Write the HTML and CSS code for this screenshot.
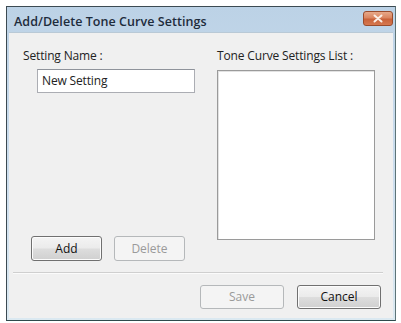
FILE: index.html
```html
<!DOCTYPE html>
<html>
<head>
<meta charset="utf-8">
<link rel="stylesheet" href="styles.css">
</head>
<body>
<div class="window">
  <div class="titlebar">
    <span class="title">Add/Delete Tone Curve Settings</span>
    <div class="close">
      <svg width="12" height="9" viewBox="0 0 12 9"><path d="M2.5 1.5 L9.5 7.5 M9.5 1.5 L2.5 7.5" stroke="#fbeee6" stroke-width="2" stroke-linecap="round"/></svg>
    </div>
  </div>
  <div class="client">
    <div class="main">
      <div class="col-left">
        <div class="label">Setting Name :</div>
        <div class="input">New Setting</div>
        <div class="btn-row">
          <div class="btn">Add</div>
          <div class="btn disabled">Delete</div>
        </div>
      </div>
      <div class="col-right">
        <div class="label">Tone Curve Settings List :</div>
        <div class="list"></div>
      </div>
    </div>
    <div class="separator"></div>
    <div class="footer">
      <div class="btn wide disabled">Save</div>
      <div class="btn wide">Cancel</div>
    </div>
  </div>
</div>
</body>
</html>
```

FILE: styles.css
```css
html, body {
  margin: 0;
  padding: 0;
  background: #ffffff;
}
body {
  font-family: "Open Sans", "Noto Sans", sans-serif;
  font-size: 12px;
  color: #1a1a1a;
}
.window {
  margin: 6px 0 0 6px;
  width: 388px;
  height: 313px;
  border: 1px solid #3c4a52;
  border-right-color: #5d7478;
  border-bottom-color: #2f4a4c;
  background: linear-gradient(180deg, #bcd2e6 0%, #cfe0ef 60%, #dbe9f1 100%);
  display: flex;
  flex-direction: column;
}
.titlebar {
  height: 25px;
  display: flex;
  align-items: flex-start;
  justify-content: space-between;
  padding-left: 7px;
}
.title {
  margin-top: 6px;
  font-size: 12.5px;
  font-weight: 600;
  color: #1e2c3c;
  letter-spacing: 0.05px;
}
.close {
  margin-top: 4px;
  margin-right: 2px;
  width: 28px;
  height: 13px;
  border: 1px solid #9a4b2c;
  border-radius: 3px;
  background: linear-gradient(180deg, #e7a98a 0%, #da8560 45%, #c9623a 55%, #d6784f 100%);
  display: flex;
  align-items: center;
  justify-content: center;
}
.client {
  flex: 1;
  margin: 0 2px 2px 2px;
  background: #f0f0f0;
  border-top: 1px solid #b9c9d6;
  display: flex;
  flex-direction: column;
  padding-top: 16px;
}
.main {
  display: grid;
  grid-template-columns: 194px 158px;
  padding-left: 14px;
  height: 212px;
}
.label {
  height: 14px;
  line-height: 14px;
  color: #222;
  letter-spacing: -0.15px;
}
.col-left {
  display: flex;
  flex-direction: column;
}
.input {
  margin-top: 6px;
  margin-left: 14px;
  width: 152px;
  height: 22px;
  line-height: 22px;
  border: 1px solid #abadb3;
  border-top-color: #8f939b;
  background: #ffffff;
  padding-left: 4px;
  color: #222;
  letter-spacing: -0.15px;
}
.btn-row {
  margin-top: auto;
  margin-left: 8px;
  display: flex;
  gap: 12px;
}
.btn {
  width: 69px;
  height: 23px;
  line-height: 23px;
  text-align: center;
  border: 1px solid #707070;
  border-radius: 3px;
  background: linear-gradient(180deg, #f4f4f4 0%, #ebebeb 48%, #dddddd 52%, #d0d0d0 100%);
  box-shadow: inset 0 0 0 1px #fcfcfc;
  color: #111;
}
.btn.disabled {
  border-color: #b5b8ba;
  background: #f4f4f4;
  box-shadow: none;
  color: #9a9a9a;
}
.btn.wide {
  width: 82px;
  height: 22px;
  line-height: 22px;
}
.col-right {
  display: flex;
  flex-direction: column;
}
.list {
  margin-top: 7px;
  width: 156px;
  height: 168px;
  border: 1px solid #9a9a9a;
  background: #ffffff;
  box-shadow: inset 1px 1px 0 #e2e2e2;
}
.separator {
  margin: 11px 0 0 4px;
  width: 370px;
  height: 1px;
  background: #cfcfcf;
  border-bottom: 1px solid #fbfbfb;
}
.footer {
  margin-top: 11px;
  display: flex;
  justify-content: flex-end;
  gap: 13px;
  padding-right: 12px;
}
```
